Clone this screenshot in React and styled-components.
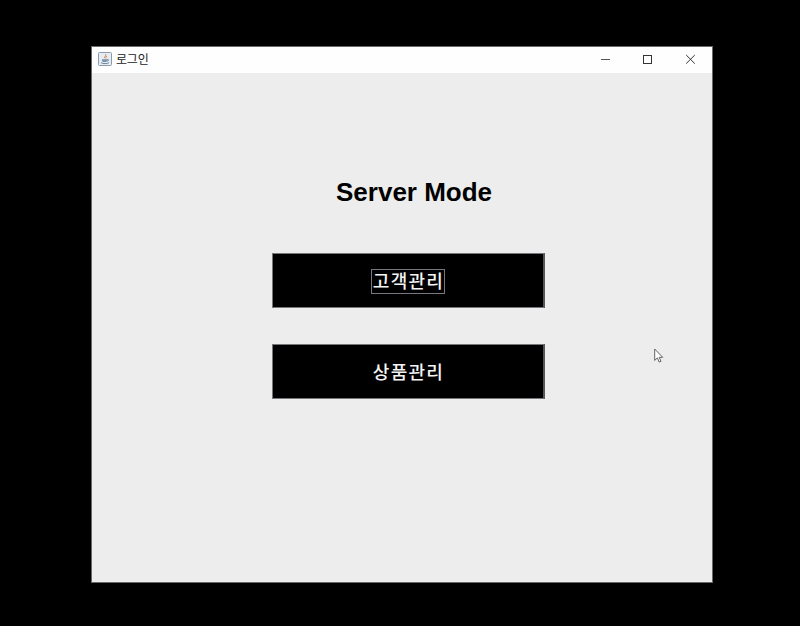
import React from 'react';
import styled, { createGlobalStyle } from 'styled-components';

const GlobalStyle = createGlobalStyle`
  * { box-sizing: border-box; }
  body { margin: 0; background: #000; overflow: hidden; }
`;

const Desktop = styled.main`
  position: relative;
  width: 800px;
  height: 626px;
  padding: 46px 87px 43px 91px;
  background: #000;
`;

const Window = styled.section`
  display: flex;
  flex-direction: column;
  width: 622px;
  height: 537px;
  border: 1px solid #6a686a;
  background: #ededed;
`;

const TitleBar = styled.header`
  display: flex;
  align-items: center;
  flex: none;
  height: 26px;
  padding: 0 0 2px 6px;
  background: #fefefe;
`;

const Caption = styled.span`
  flex: 1;
  margin-left: 4px;
  font: 400 12px/18px 'Noto Sans CJK KR', sans-serif;
  letter-spacing: -0.2px;
  color: #222;
`;

const WindowControls = styled.div`
  display: flex;
  height: 100%;
`;

const ControlButton = styled.button`
  display: flex;
  align-items: center;
  justify-content: center;
  width: ${({ $width }) => $width}px;
  padding: 0;
  border: 0;
  background: transparent;
`;

const Content = styled.div`
  display: flex;
  flex-direction: column;
  align-items: flex-start;
  flex: 1;
  padding: 102px 0 0 180px;
`;

const Heading = styled.h1`
  margin: 0 0 43px 64px;
  font: 700 26px/35px 'Liberation Sans', Arial, sans-serif;
  white-space: nowrap;
  color: #000;
`;

const MenuButton = styled.button`
  display: flex;
  align-items: center;
  justify-content: center;
  width: 273px;
  height: 55px;
  margin-bottom: 36px;
  padding: 1px 0 0;
  border: 1px solid #77767a;
  border-right: 2px solid #57555b;
  background: #000;
`;

const MenuLabel = styled.span`
  display: flex;
  align-items: center;
  justify-content: center;
  width: 74px;
  height: 25px;
  border: 1px solid ${({ $focused }) => ($focused ? '#77777f' : 'transparent')};
  font: 500 18px/21px 'Noto Sans CJK KR', sans-serif;
  padding-bottom: 2px;
  letter-spacing: 1.3px;
  text-indent: 1px;
  white-space: nowrap;
  color: #f4f4f4;
`;

const Cursor = styled.svg`
  position: absolute;
  left: 654px;
  top: 348px;
`;

const JavaIcon = () => (
  <svg width="14" height="14" viewBox="0 0 14 14" fill="none">
    <rect x=".5" y=".5" width="13" height="13" rx="1" fill="#e6ecf1" stroke="#8b9cae" />
    <path d="M7.7 2.2c1 1.5-2.2 2.3-.7 4.1M9 4.2C7.3 5 7.5 5.6 8 6.4" stroke="#d18a55" />
    <path d="M4 7.3h5.2v1.6c-.7 1.3-4.5 1.3-5.2 0z" fill="#7892aa" />
    <path d="M9.2 7.5c2-.3 1.6 1.3-.2 1.6M3 10.7c2 1.2 6.2 1.2 8 0" stroke="#6684a0" />
  </svg>
);

function App() {
  return (
    <>
      <GlobalStyle />
      <Desktop>
        <Window>
          <TitleBar>
            <JavaIcon />
            <Caption>로그인</Caption>
            <WindowControls>
              <ControlButton $width={42} aria-label="Minimize">
                <svg width="10" height="10"><path d="M1 5.5h9" stroke="#555" /></svg>
              </ControlButton>
              <ControlButton $width={43} aria-label="Maximize">
                <svg width="10" height="10"><rect x=".5" y="1.5" width="8" height="8" fill="none" stroke="#333" /></svg>
              </ControlButton>
              <ControlButton $width={43} aria-label="Close">
                <svg width="10" height="10"><path d="M.2 1l8.6 8.6M8.8 1L.2 9.6" stroke="#333" /></svg>
              </ControlButton>
            </WindowControls>
          </TitleBar>
          <Content>
            <Heading>Server Mode</Heading>
            <MenuButton><MenuLabel $focused>고객관리</MenuLabel></MenuButton>
            <MenuButton><MenuLabel>상품관리</MenuLabel></MenuButton>
          </Content>
        </Window>
        <Cursor width="10" height="16" viewBox="0 0 10 16">
          <path d="M.7 1v11.4l2.7-2.5 1.8 4.2 1.8-.8-1.8-4h3.5z" fill="#fff" stroke="#555" strokeWidth=".9" />
        </Cursor>
      </Desktop>
    </>
  );
}

export default App;
